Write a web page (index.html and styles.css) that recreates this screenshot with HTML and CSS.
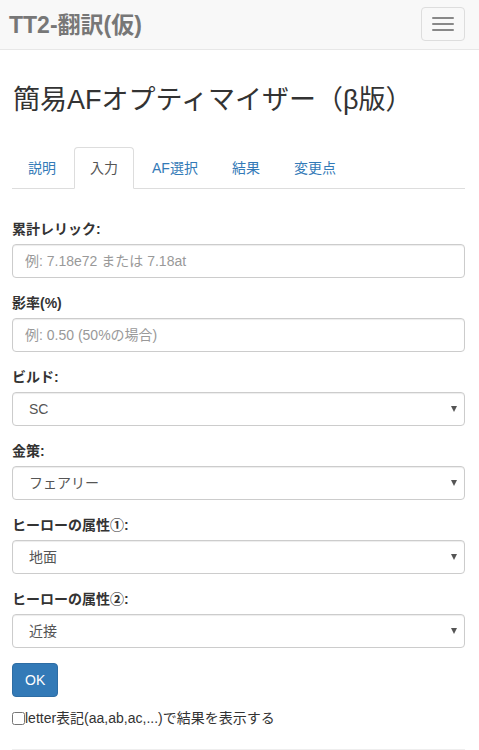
FILE: index.html
```html
<!DOCTYPE html>
<html lang="ja">
<head>
<meta charset="utf-8">
<title>TT2-翻訳(仮)</title>
<link rel="stylesheet" href="styles.css">
</head>
<body>
<nav class="navbar">
  <a class="brand" href="#">TT2-翻訳(仮)</a>
  <button class="toggle" type="button" aria-label="menu">
    <span class="bar"></span><span class="bar"></span><span class="bar"></span>
  </button>
</nav>
<main class="container">
  <h1 class="title">簡易AFオプティマイザー（β版）</h1>
  <ul class="tabs">
    <li class="tab"><a href="#">説明</a></li>
    <li class="tab active"><a href="#">入力</a></li>
    <li class="tab"><a href="#">AF選択</a></li>
    <li class="tab"><a href="#">結果</a></li>
    <li class="tab"><a href="#">変更点</a></li>
  </ul>
  <form class="tab-content">
    <div class="form-group">
      <label class="label">累計レリック:</label>
      <input class="control" type="text" placeholder="例: 7.18e72 または 7.18at">
    </div>
    <div class="form-group">
      <label class="label">影率(%)</label>
      <input class="control" type="text" placeholder="例: 0.50 (50%の場合)">
    </div>
    <div class="form-group">
      <label class="label">ビルド:</label>
      <div class="select-wrap"><select class="control select"><option>SC</option></select></div>
    </div>
    <div class="form-group">
      <label class="label">金策:</label>
      <div class="select-wrap"><select class="control select"><option>フェアリー</option></select></div>
    </div>
    <div class="form-group">
      <label class="label">ヒーローの属性①:</label>
      <div class="select-wrap"><select class="control select"><option>地面</option></select></div>
    </div>
    <div class="form-group">
      <label class="label">ヒーローの属性②:</label>
      <div class="select-wrap"><select class="control select"><option>近接</option></select></div>
    </div>
    <button class="btn" type="button">OK</button>
    <div class="check-row">
      <input class="check" type="checkbox"><span>letter表記(aa,ab,ac,...)で結果を表示する</span>
    </div>
    <hr class="rule">
  </form>
</main>
</body>
</html>
```

FILE: styles.css
```css
* { box-sizing: border-box; }
html, body { margin: 0; padding: 0; }
body {
  font-family: "Liberation Sans", "Noto Sans CJK JP", sans-serif;
  font-size: 14px;
  line-height: 20px;
  color: #333;
  background: #fff;
}
.navbar {
  height: 50px;
  background: #f8f8f8;
  border-bottom: 1px solid #e7e7e7;
  display: flex;
  align-items: center;
  justify-content: space-between;
  padding: 0 14px 0 9px;
}
.brand {
  font-size: 23px;
  font-weight: bold;
  color: #777;
  text-decoration: none;
  line-height: 24px;
  margin-top: 1px;
}
.toggle {
  width: 44px;
  height: 34px;
  border: 1px solid #ddd;
  border-radius: 4px;
  background: transparent;
  display: flex;
  flex-direction: column;
  align-items: center;
  justify-content: center;
  gap: 4px;
  padding: 0;
  margin-top: -1px;
}
.bar {
  display: block;
  width: 22px;
  height: 2px;
  background: #888;
  border-radius: 1px;
}
.container {
  padding: 0 14px 0 12px;
}
.title {
  font-size: 27px;
  font-weight: normal;
  line-height: 30px;
  margin: 35px 0 0 1px;
  color: #333;
}
.tabs {
  list-style: none;
  margin: 32px 0 0;
  padding: 0;
  display: flex;
  border-bottom: 1px solid #ddd;
}
.tab {
  margin-bottom: -1px;
  margin-right: 2px;
}
.tab a {
  display: block;
  padding: 10px 15px;
  line-height: 20px;
  border: 1px solid transparent;
  border-radius: 4px 4px 0 0;
  color: #337ab7;
  text-decoration: none;
}
.tab.active a {
  color: #555;
  background: #fff;
  border-color: #ddd #ddd transparent;
}
.tab-content {
  padding-top: 30px;
}
.form-group {
  margin-bottom: 15px;
}
.label {
  display: block;
  font-weight: bold;
  margin-bottom: 5px;
  line-height: 20px;
}
.control {
  display: block;
  width: 100%;
  height: 34px;
  padding: 6px 12px;
  font-family: inherit;
  font-size: 14px;
  line-height: 20px;
  color: #555;
  background: #fff;
  border: 1px solid #ccc;
  border-radius: 4px;
  box-shadow: inset 0 1px 1px rgba(0,0,0,.075);
}
.control::placeholder { color: #999; }
.select-wrap { position: relative; }
.select {
  -webkit-appearance: none;
  appearance: none;
  padding-left: 16px;
}
.select-wrap::after {
  content: "";
  position: absolute;
  right: 8px;
  top: 14px;
  border-left: 3px solid transparent;
  border-right: 3px solid transparent;
  border-top: 6px solid #555;
  pointer-events: none;
}
.btn {
  display: block;
  margin-top: 1px;
  height: 34px;
  padding: 6px 12px;
  font-family: inherit;
  font-size: 14px;
  line-height: 20px;
  color: #fff;
  background: #337ab7;
  border: 1px solid #2e6da4;
  border-radius: 4px;
}
.check-row {
  display: flex;
  align-items: center;
  margin-top: 11px;
  line-height: 20px;
}
.check {
  width: 13px;
  height: 13px;
  margin: 0;
}
.rule {
  border: 0;
  border-top: 1px solid #eee;
  margin: 21px 0 0;
}
```
